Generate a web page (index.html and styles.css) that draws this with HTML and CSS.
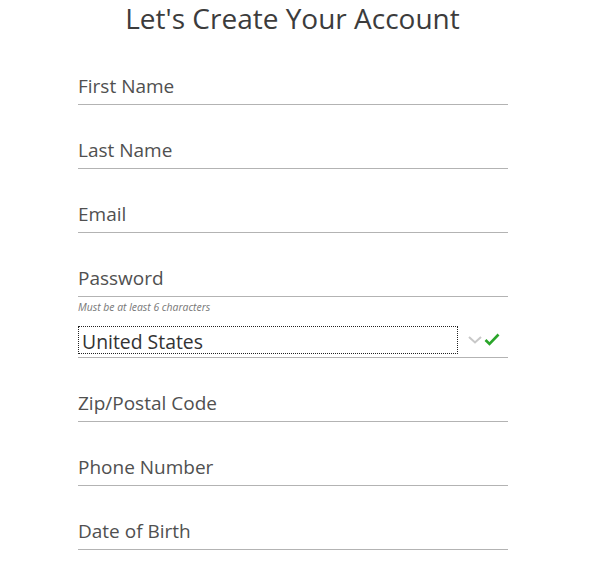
FILE: index.html
```
<!DOCTYPE html>
<html>
<head>
<meta charset="utf-8">
<link rel="stylesheet" href="styles.css">
</head>
<body>
<h1 class="title">Let's Create Your Account</h1>
<form class="form">
  <div class="field"><span class="label">First Name</span></div>
  <div class="field"><span class="label">Last Name</span></div>
  <div class="field"><span class="label">Email</span></div>
  <div class="field"><span class="label">Password</span></div>
  <div class="hint">Must be at least 6 characters</div>
  <div class="select-field">
    <div class="select-box">United States</div>
    <div class="icons">
      <svg class="chev" width="14" height="8" viewBox="0 0 14 8"><path d="M1 1 L7 6.5 L13 1" fill="none" stroke="#c8c8c8" stroke-width="2"/></svg>
      <svg class="check" width="16" height="13" viewBox="0 0 16 13"><path d="M1.5 7 L5.5 11 L14.5 1.5" fill="none" stroke="#2aa52a" stroke-width="2.6"/></svg>
    </div>
  </div>
  <div class="field"><span class="label">Zip/Postal Code</span></div>
  <div class="field"><span class="label">Phone Number</span></div>
  <div class="field"><span class="label">Date of Birth</span></div>
</form>
</body>
</html>
```
FILE: styles.css
```
html, body {
  margin: 0;
  padding: 0;
  background: #fff;
  font-family: "Open Sans", "Liberation Sans", sans-serif;
}
.title {
  margin: 0;
  height: 41px;
  padding-right: 10px;
  font-size: 28px;
  font-weight: 400;
  line-height: 36px;
  color: #3c3c3c;
  text-align: center;
}
.form {
  width: 430px;
  margin-left: 78px;
  display: flex;
  flex-direction: column;
}
.field {
  box-sizing: border-box;
  height: 64px;
  border-bottom: 1px solid #b3b3b3;
  display: flex;
  align-items: flex-end;
  padding-bottom: 6px;
}
.label {
  font-size: 19px;
  line-height: 24px;
  color: #505050;
}
.hint {
  height: 19px;
  font-size: 10.4px;
  font-style: italic;
  color: #777;
  line-height: 21px;
}
.select-field {
  box-sizing: border-box;
  height: 42px;
  border-bottom: 1px solid #b3b3b3;
  display: flex;
  align-items: flex-start;
  padding-top: 10px;
}
.select-box {
  box-sizing: border-box;
  width: 380px;
  height: 28px;
  border: 1px dotted #222;
  padding-left: 3px;
  font-size: 19.4px;
  line-height: 30px;
  color: #333;
}
.icons {
  display: flex;
  align-items: center;
  gap: 2px;
  margin-left: 10px;
  height: 26px;
}
.chev { margin-top: 2px; }
```
